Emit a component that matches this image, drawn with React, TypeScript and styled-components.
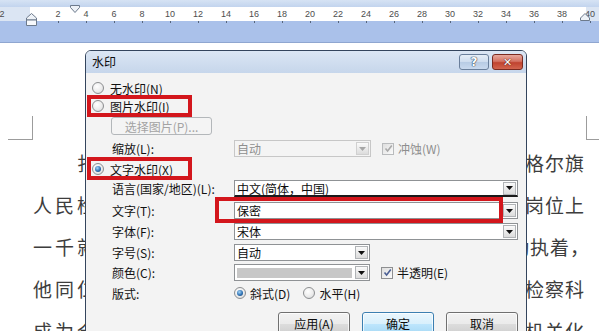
import React from "react";
import styled, { createGlobalStyle, css } from "styled-components";

const GlobalStyle = createGlobalStyle`
  html, body { margin: 0; padding: 0; background: #ffffff; }
  body { font-family: "Noto Sans CJK SC", "Noto Sans", sans-serif; overflow: hidden; }
`;

const Screen = styled.div`
  position: relative;
  width: 599px;
  height: 331px;
  overflow: hidden;
  background: #ffffff;
`;

/* ---------------- Ruler ---------------- */
const Ruler = styled.div`
  display: flex;
  flex-direction: column;
  height: 43px;
  box-sizing: border-box;
  background: #aac1ea;
  border-bottom: 1px solid #8fa6d0;
`;

const RulerCap = styled.div`
  height: 7px;
  background: linear-gradient(#d6e3f4, #c2d4ee);
`;

const RulerStrip = styled.div`
  position: relative;
  height: 14px;
  background: linear-gradient(
    to right,
    #dbe5f3 0,
    #dbe5f3 30px,
    #ffffff 30px,
    #ffffff 586px,
    #dbe5f3 586px
  );
`;

const ScaleRow = styled.div`
  display: flex;
  height: 100%;
  margin-left: -12px;
`;

const ScaleCell = styled.span`
  flex: 0 0 28px;
  text-align: center;
  font-family: "Liberation Sans", Arial, sans-serif;
  font-size: 9px;
  line-height: 14px;
  color: #4d4d4d;
`;

const TickRow = styled.div`
  display: flex;
  height: 3px;
  margin-left: -12px;
`;

const Tick = styled.span<{ $on: boolean }>`
  flex: 0 0 28px;
  display: flex;
  justify-content: center;
  &::before {
    content: "";
    width: 1px;
    height: 2px;
    background: ${(p) => (p.$on ? "#56657c" : "transparent")};
  }
`;

const RulerMarker = styled.svg<{ $x: number; $y: number }>`
  position: absolute;
  left: ${(p) => p.$x}px;
  top: ${(p) => p.$y}px;
`;

/* ---------------- Page ---------------- */
const Page = styled.div`
  padding-top: 73px;
`;

const CornerRow = styled.div`
  display: flex;
  justify-content: space-between;
  padding-left: 8px;
`;

const CornerMark = styled.div<{ $side: "left" | "right" }>`
  box-sizing: border-box;
  height: 24px;
  border-bottom: 1px solid #9c9c9c;
  ${(p) =>
    p.$side === "left"
      ? css`
          width: 25px;
          border-right: 1px solid #9c9c9c;
        `
      : css`
          width: 13px;
          border-left: 1px solid #9c9c9c;
        `}
`;

const TextBlock = styled.div`
  margin-top: 2px;
`;

const TextLine = styled.div`
  display: flex;
  justify-content: space-between;
  align-items: center;
  height: 42px;
  line-height: 42px;
  padding: 0 14px 0 33px;
  font-family: "Noto Sans CJK SC", sans-serif;
  font-size: 19px;
  color: #3d3d3d;
  white-space: nowrap;
`;

const LeftText = styled.span`
  letter-spacing: 3px;
`;

const RightText = styled.span<{ $shift?: number }>`
  letter-spacing: 1px;
  margin-right: ${(p) => -(p.$shift || 0)}px;
`;

/* ---------------- Dialog ---------------- */
const Dialog = styled.div`
  position: absolute;
  left: 85px;
  top: 50px;
  width: 442px;
  height: 300px;
  box-sizing: border-box;
  display: flex;
  flex-direction: column;
  border: 1px solid #34455d;
  border-radius: 6px 6px 0 0;
  background: #f3f3f3;
  overflow: hidden;
  font-family: "Noto Sans CJK SC", sans-serif;
  font-size: 12px;
  color: #111111;
`;

const TitleBar = styled.div`
  display: flex;
  justify-content: space-between;
  align-items: flex-start;
  height: 22px;
  flex: none;
  padding: 0 3px 0 6px;
  background: linear-gradient(#dbe6f4, #c6d6eb);
`;

const TitleText = styled.span`
  line-height: 22px;
  font-size: 12px;
  color: #0d0d0d;
`;

const TitleButtons = styled.div`
  display: flex;
  gap: 3px;
  padding-top: 3px;
`;

const CaptionButton = styled.div<{ $kind: "help" | "close" }>`
  box-sizing: border-box;
  height: 16px;
  border-radius: 3px;
  display: flex;
  align-items: center;
  justify-content: center;
  font-family: "DejaVu Sans", sans-serif;
  font-weight: bold;
  color: #ffffff;
  ${(p) =>
    p.$kind === "help"
      ? css`
          width: 30px;
          border: 1px solid #6a7f9b;
          background: linear-gradient(#e6eef8 0%, #cddcee 50%, #b7cbe4 51%, #c9d9ee 100%);
          font-size: 12px;
          text-shadow: 0 0 1px #2c3d55, 0 0 1px #2c3d55, 0 0 1px #2c3d55;
        `
      : css`
          width: 31px;
          border: 1px solid #7a2a20;
          background: linear-gradient(#e7a89d 0%, #d47262 45%, #c0432f 55%, #d2644e 100%);
          font-size: 11px;
          text-shadow: 0 0 1px #5a1a12, 0 0 1px #5a1a12;
        `}
`;

const Body = styled.div`
  flex: 1;
  display: flex;
  flex-direction: column;
  padding: 0 8px 0 0;
`;

const Row = styled.div<{ $mt: number; $h: number; $pl: number }>`
  position: relative;
  display: flex;
  align-items: center;
  margin-top: ${(p) => p.$mt}px;
  height: ${(p) => p.$h}px;
  padding-left: ${(p) => p.$pl}px;
  white-space: nowrap;
`;

const Label = styled.span`
  flex: 0 0 122px;
`;

const Highlight = styled.span<{ $l: number; $t: number; $w: number; $h: number }>`
  position: absolute;
  left: ${(p) => p.$l}px;
  top: ${(p) => p.$t}px;
  width: ${(p) => p.$w}px;
  height: ${(p) => p.$h}px;
  box-sizing: border-box;
  border: 4px solid #d3161c;
  pointer-events: none;
`;

const RadioItem = styled.span<{ $gap: number }>`
  display: inline-flex;
  align-items: center;
  gap: ${(p) => p.$gap}px;
`;

const RadioCircle = styled.span<{ $checked?: boolean }>`
  box-sizing: border-box;
  width: 12px;
  height: 12px;
  flex: none;
  border-radius: 50%;
  border: 1px solid #8c8e90;
  background: radial-gradient(circle at 40% 35%, #ffffff 0%, #ececec 55%, #cfd1d3 100%);
  display: flex;
  align-items: center;
  justify-content: center;
  &::after {
    content: "";
    display: ${(p) => (p.$checked ? "block" : "none")};
    width: 6px;
    height: 6px;
    border-radius: 50%;
    background: radial-gradient(circle at 40% 35%, #a6d6f7 0%, #2f72b5 55%, #163a62 100%);
  }
`;

const RadioGroup = styled.div`
  display: flex;
  align-items: center;
  gap: 13px;
`;

const GhostButton = styled.div`
  box-sizing: border-box;
  width: 101px;
  height: 18px;
  border: 1px solid #b3b7ba;
  border-radius: 3px;
  background: #f4f4f4;
  color: #a3a3a3;
  display: flex;
  align-items: center;
  justify-content: center;
`;

const Combo = styled.div<{ $w: number; $disabled?: boolean; $strong?: boolean }>`
  box-sizing: border-box;
  width: ${(p) => p.$w}px;
  height: 17px;
  flex: none;
  display: flex;
  align-items: center;
  padding: 0 1px 0 2px;
  border: 1px solid ${(p) => (p.$disabled ? "#c7c7c7" : "#8f9295")};
  border-bottom: ${(p) => (p.$strong ? "2px solid #1a1a1a" : "")};
  background: ${(p) => (p.$disabled ? "#f4f4f4" : "#ffffff")};
  color: ${(p) => (p.$disabled ? "#8f8f8f" : "#0d0d0d")};
`;

const ComboText = styled.span`
  flex: 1;
  line-height: 15px;
  overflow: hidden;
`;

const Swatch = styled.span`
  flex: 1;
  height: 10px;
  margin-right: 3px;
  background: #c7c7c7;
`;

const DropButton = styled.span<{ $disabled?: boolean }>`
  box-sizing: border-box;
  width: 13px;
  height: 13px;
  flex: none;
  display: flex;
  align-items: center;
  justify-content: center;
  border: 1px solid ${(p) => (p.$disabled ? "#d0d0d0" : "#b0b3b6")};
  background: linear-gradient(#fafafa, #dcdcdc);
`;

const CheckItem = styled.span<{ $disabled?: boolean }>`
  display: inline-flex;
  align-items: center;
  gap: 4px;
  margin-left: 11px;
  color: ${(p) => (p.$disabled ? "#8e8e8e" : "#111111")};
`;

const CheckBox = styled.span<{ $disabled?: boolean }>`
  box-sizing: border-box;
  width: 12px;
  height: 12px;
  flex: none;
  display: flex;
  align-items: center;
  justify-content: center;
  border: 1px solid ${(p) => (p.$disabled ? "#b9bbbd" : "#8e8f91")};
  background: linear-gradient(135deg, #dedede, #fbfbfb);
`;

const ButtonRow = styled.div`
  display: flex;
  justify-content: flex-end;
  gap: 12px;
  margin-top: 10px;
`;

const PushButton = styled.div<{ $primary?: boolean }>`
  box-sizing: border-box;
  width: 72px;
  height: 23px;
  border-radius: 3px;
  display: flex;
  align-items: center;
  justify-content: center;
  color: #0d0d0d;
  box-shadow: inset 0 0 0 1px rgba(255, 255, 255, 0.75);
  ${(p) =>
    p.$primary
      ? css`
          border: 1px solid #3c7fb1;
          background: linear-gradient(#eaf6fd 0%, #d9f0fc 50%, #bee6fd 51%, #a7d9f5 100%);
        `
      : css`
          border: 1px solid #707070;
          background: linear-gradient(#f2f2f2 0%, #ebebeb 50%, #dddddd 51%, #cfcfcf 100%);
        `}
`;

/* ---------------- Small drawings ---------------- */
const Caret = ({ disabled }: { disabled?: boolean }) => (
  <svg width="7" height="4" viewBox="0 0 7 4">
    <path d="M0 0 H7 L3.5 4 Z" fill={disabled ? "#a6a6a6" : "#111111"} />
  </svg>
);

const Tickmark = ({ disabled }: { disabled?: boolean }) => (
  <svg width="9" height="9" viewBox="0 0 9 9">
    <path
      d="M1.5 4.5 L3.6 7 L7.8 1.6"
      fill="none"
      stroke={disabled ? "#a9a9a9" : "#4b5f94"}
      strokeWidth="1.6"
    />
  </svg>
);

const Combobox = ({
  w,
  text,
  disabled,
  strong,
  swatch,
}: {
  w: number;
  text?: string;
  disabled?: boolean;
  strong?: boolean;
  swatch?: boolean;
}) => (
  <Combo $w={w} $disabled={disabled} $strong={strong}>
    {swatch ? <Swatch /> : <ComboText>{text}</ComboText>}
    <DropButton $disabled={disabled}>
      <Caret disabled={disabled} />
    </DropButton>
  </Combo>
);

const scale = ["2", "", "2", "4", "6", "8", "10", "12", "14", "16", "18", "20", "22", "24", "26", "28", "30", "32", "34", "36", "38", "40"];

const lines: { left: string; right: string; shift?: number }[] = [
  { left: "　　扎", right: "格尔旗" },
  { left: "人民检", right: "岗位上" },
  { left: "一千就", right: "勤执着，", shift: 5 },
  { left: "他同仁", right: "检察科" },
  { left: "成为全", right: "机关化" },
];

export default function App() {
  return (
    <Screen>
      <GlobalStyle />
      <Ruler>
        <RulerCap />
        <RulerStrip>
          <ScaleRow>
            {scale.map((n, i) => (
              <ScaleCell key={i}>{n}</ScaleCell>
            ))}
          </ScaleRow>
          <RulerMarker $x={70} $y={-2} width="10" height="8" viewBox="0 0 10 8">
            <path d="M0.5 0.5 H9.5 V2.5 L5 7.5 L0.5 2.5 Z" fill="#eef2f7" stroke="#6d7a8c" />
          </RulerMarker>
          <RulerMarker $x={26} $y={6} width="11" height="13" viewBox="0 0 11 13">
            <path d="M5.5 0.5 L10.5 5 V7 H0.5 V5 Z" fill="#eef2f7" stroke="#6d7a8c" />
            <path d="M0.5 7 H10.5 V12.5 H0.5 Z" fill="#f7f9fc" stroke="#6d7a8c" />
          </RulerMarker>
          <RulerMarker $x={580} $y={6} width="10" height="8" viewBox="0 0 10 8">
            <path d="M5 0.5 L9.5 5 V7.5 H0.5 V5 Z" fill="#eef2f7" stroke="#6d7a8c" />
          </RulerMarker>
        </RulerStrip>
        <TickRow>
          {scale.map((n, i) => (
            <Tick key={i} $on={i > 1} />
          ))}
        </TickRow>
      </Ruler>

      <Page>
        <CornerRow>
          <CornerMark $side="left" />
          <CornerMark $side="right" />
        </CornerRow>
        <TextBlock>
          {lines.map((l, i) => (
            <TextLine key={i}>
              <LeftText>{l.left}</LeftText>
              <RightText $shift={l.shift}>{l.right}</RightText>
            </TextLine>
          ))}
        </TextBlock>
      </Page>

      <Dialog>
        <TitleBar>
          <TitleText>水印</TitleText>
          <TitleButtons>
            <CaptionButton $kind="help">?</CaptionButton>
            <CaptionButton $kind="close">✕</CaptionButton>
          </TitleButtons>
        </TitleBar>
        <Body>
          <Row $mt={6} $h={18} $pl={6}>
            <RadioItem $gap={6}>
              <RadioCircle />
              无水印(N)
            </RadioItem>
          </Row>
          <Row $mt={0} $h={18} $pl={6}>
            <RadioItem $gap={6}>
              <RadioCircle />
              图片水印(I)
            </RadioItem>
            <Highlight $l={1} $t={-2} $w={105} $h={22} />
          </Row>
          <Row $mt={2} $h={18} $pl={25}>
            <GhostButton>选择图片(P)...</GhostButton>
          </Row>
          <Row $mt={5} $h={17} $pl={26}>
            <Label>缩放(L):</Label>
            <Combobox w={137} text="自动" disabled />
            <CheckItem $disabled>
              <CheckBox $disabled>
                <Tickmark disabled />
              </CheckBox>
              冲蚀(W)
            </CheckItem>
          </Row>
          <Row $mt={3} $h={18} $pl={6}>
            <RadioItem $gap={6}>
              <RadioCircle $checked />
              文字水印(X)
            </RadioItem>
            <Highlight $l={1} $t={-3} $w={105} $h={23} />
          </Row>
          <Row $mt={2} $h={17} $pl={26}>
            <Label>语言(国家/地区)(L):</Label>
            <Combobox w={284} text="中文(简体，中国)" strong />
          </Row>
          <Row $mt={5} $h={17} $pl={26}>
            <Label>文字(T):</Label>
            <Combobox w={284} text="保密" />
            <Highlight $l={129} $t={-5} $w={288} $h={26} />
          </Row>
          <Row $mt={4} $h={17} $pl={26}>
            <Label>字体(F):</Label>
            <Combobox w={284} text="宋体" />
          </Row>
          <Row $mt={4} $h={17} $pl={26}>
            <Label>字号(S):</Label>
            <Combobox w={136} text="自动" />
          </Row>
          <Row $mt={3} $h={17} $pl={26}>
            <Label>颜色(C):</Label>
            <Combobox w={136} swatch />
            <CheckItem>
              <CheckBox>
                <Tickmark />
              </CheckBox>
              半透明(E)
            </CheckItem>
          </Row>
          <Row $mt={3} $h={18} $pl={26}>
            <Label>版式:</Label>
            <RadioGroup>
              <RadioItem $gap={4}>
                <RadioCircle $checked />
                斜式(D)
              </RadioItem>
              <RadioItem $gap={4}>
                <RadioCircle />
                水平(H)
              </RadioItem>
            </RadioGroup>
          </Row>
          <ButtonRow>
            <PushButton>应用(A)</PushButton>
            <PushButton $primary>确定</PushButton>
            <PushButton>取消</PushButton>
          </ButtonRow>
        </Body>
      </Dialog>
    </Screen>
  );
}
